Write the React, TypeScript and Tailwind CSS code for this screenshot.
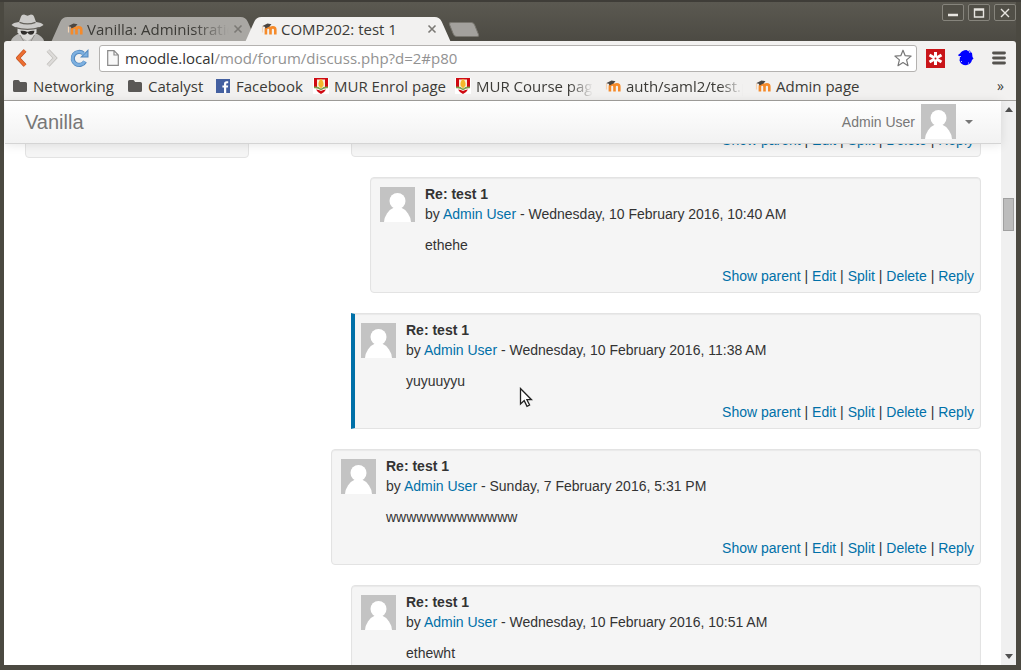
import { useState } from 'react';
import type { ReactNode } from 'react';
import { clsx } from 'clsx';

function MoodleIcon() {
  return (
    <svg width="16" height="16" viewBox="0 0 16 16" className="shrink-0" aria-hidden="true">
      <path d="M4.900 13.500V8.800c0-3.200 4.600-3.200 4.600 0v4.700M9.500 8.800c0-3.200 4.800-3.200 4.800 0v4.700" fill="none" stroke="#f58a2a" strokeWidth="2.600" />
      <path d="M1 5.200 6.500 2.500 10.500 3.200 8.500 5.600 4.600 7.600 3.800 5.800Z" fill="#4a4642" />
      <path d="M1.500 5.500v6" stroke="#f3d3b4" strokeWidth="1.200" />
    </svg>
  );
}

function FolderIcon() {
  return (
    <svg width="15" height="14" viewBox="0 0 15 14" className="shrink-0" aria-hidden="true">
      <path d="M0 2.500Q0 1 1.500 1H5q1 0 1.500 1l.5 1h5.500Q14 3 14 4.500v7q0 1.500-1.500 1.500h-11Q0 13 0 11.500Z" fill="#5a5856" />
    </svg>
  );
}

function FacebookIcon() {
  return (
    <svg width="15" height="14" viewBox="0 0 15 14" className="shrink-0" aria-hidden="true">
      <rect width="14" height="14" fill="#4460a0" />
      <path d="M8 14V8.600H6.400V6.500H8V4.900C8 3.200 9 2.200 10.600 2.200h1.600v2H11c-.6 0-.8.3-.8.9v1.400h2l-.3 2.100h-1.700V14Z" fill="#fff" />
    </svg>
  );
}

function CrestIcon() {
  return (
    <svg width="16" height="16" viewBox="0 0 16 16" className="shrink-0" aria-hidden="true">
      <rect width="16" height="16" fill="#fff" />
      <path d="M1 0h14v9H1Z" fill="#cf0a12" />
      <path d="M4 1.500h8V9H4Z" fill="#f8f0dc" />
      <path d="M8 .8q3.200 3 2.400 7L8 10.500 5.600 7.800Q4.800 3.800 8 .8Z" fill="#f4b72a" />
      <path d="M1 9.500q4-.5 7 2 3-2.500 7-2" fill="none" stroke="#7da04a" strokeWidth="1.600" />
      <path d="M3 11.500q3 .3 5 1.500 2-1.200 5-1.500-1.500 3-5 4.500-3.500-1.500-5-4.500Z" fill="#cf0a12" />
    </svg>
  );
}

function IncognitoIcon() {
  return (
    <svg width="35" height="27" viewBox="0 0 35 27" className="shrink-0" aria-hidden="true">
      <path d="M1 27q1.500-5 8-7.500h17q6.500 2.500 8 7.500Z" fill="#b9b8b6" />
      <path d="M7.500 12h19v6.500L22 24l-4.500 3-5-3-5-5.500Z" fill="#dad9d7" />
      <path d="M1.500 11q1.500-2.500 7.500-3l2-5.500Q11.500.5 14 .5l3.500 1.200L21 .5q2.500 0 3 2L26 8q6 .5 7.500 3-5 3.800-16 3.800T1.500 11Z" fill="#cccbc9" />
      <path d="M9.500 8.300q8 3.200 16 0" fill="none" stroke="#65625c" strokeWidth="1.400" />
      <path d="M5 13.700q12.500 3.400 25 0" fill="none" stroke="#65625c" strokeWidth="1.200" />
      <path d="M10.500 16.800q4-.6 6.500 1h1q3-1.600 6.500-1l-.6 2.200q-.6 1.700-3 1.700-2.300 0-3.400-2.200-1.100 2.200-3.400 2.200-2.400 0-3-1.700Z" fill="#2f2d2b" />
      <path d="m10 21 3.500 6m11-6L21 27" fill="none" stroke="#8f8d89" strokeWidth="1" />
    </svg>
  );
}

function Avatar() {
  return (
    <svg width="35" height="35" viewBox="0 0 35 35" className="block shrink-0" role="img" aria-label="Picture of Admin User">
      <rect width="35" height="35" fill="#c3c3c3" />
      <circle cx="17.500" cy="14" r="8" fill="#fff" />
      <path d="M4 35q0-4 3-8.500 3-4.500 7-6h7q4 1.500 7 6 3 4.500 3 8.500Z" fill="#fff" />
    </svg>
  );
}

function Tab({ title, active, fade, onSelect }: { title: string; active: boolean; fade?: boolean; onSelect: () => void }) {
  const shape = active ? 'bg-[#f2f1f0]' : 'bg-[#a9a7a3]';
  return (
    <div className={clsx('relative -ml-3 flex h-6 w-[206px] items-center pl-4 pr-[14px]', active && 'z-10')}>
      <span className={clsx('absolute inset-y-0 left-[6px] w-1/2 -skew-x-[24deg] rounded-tl-[5px]', shape)} />
      <span className={clsx('absolute inset-y-0 right-[6px] w-1/2 skew-x-[24deg] rounded-tr-[5px]', shape)} />
      <button type="button" role="tab" aria-selected={active} onClick={onSelect} className="relative flex min-w-0 flex-1 items-center gap-1 overflow-hidden text-[15px] leading-6 text-[#3c3b37]">
        <MoodleIcon />
        <span className={clsx('overflow-hidden whitespace-nowrap', fade && '[mask-image:linear-gradient(to_right,black_75%,transparent)]')}>{title}</span>
      </button>
      <button type="button" aria-label="Close tab" className="relative ml-1 shrink-0">
        <svg width="10" height="10" viewBox="0 0 10 10">
          <path d="m1.500 1.500 7 7m0-7-7 7" stroke="#7b7975" strokeWidth="1.600" />
        </svg>
      </button>
    </div>
  );
}

function WindowButton({ label, children }: { label: string; children: ReactNode }) {
  return (
    <button type="button" aria-label={label} className="flex h-[17px] w-[22px] items-center justify-center rounded-[2px] border border-[#86847c] bg-[#514f47]">
      <svg width="12" height="10" viewBox="0 0 12 10" fill="none" stroke="#e8e6e1" strokeWidth="1.400">
        {children}
      </svg>
    </button>
  );
}

const bookmarks = [
  { label: 'Networking', icon: <FolderIcon />, width: 'w-[115px]' },
  { label: 'Catalyst', icon: <FolderIcon />, width: 'w-[88px]' },
  { label: 'Facebook', icon: <FacebookIcon />, width: 'w-[97px]' },
  { label: 'MUR Enrol page', icon: <CrestIcon />, width: 'w-[142px]' },
  { label: 'MUR Course page', icon: <CrestIcon />, width: 'w-[150px]', fade: true },
  { label: 'auth/saml2/test.p', icon: <MoodleIcon />, width: 'w-[150px]', fade: true },
  { label: 'Admin page', icon: <MoodleIcon />, width: 'w-[115px]' },
];

const posts = [
  { id: 78, date: 'Wednesday, 10 February 2016, 10:38 AM', body: 'test', indent: 'ml-[78px]' },
  { id: 79, date: 'Wednesday, 10 February 2016, 10:40 AM', body: 'ethehe', indent: 'ml-[97px]' },
  { id: 80, date: 'Wednesday, 10 February 2016, 11:38 AM', body: 'yuyuuyyu', indent: 'ml-[78px]', target: true },
  { id: 81, date: 'Sunday, 7 February 2016, 5:31 PM', body: 'wwwwwwwwwwwww', indent: 'ml-[58px]' },
  { id: 82, date: 'Wednesday, 10 February 2016, 10:51 AM', body: 'ethewht', indent: 'ml-[78px]' },
];

const commands = ['Show parent', 'Edit', 'Split', 'Delete', 'Reply'];

function Post({ post }: { post: (typeof posts)[number] }) {
  return (
    <article
      id={`p${post.id}`}
      className={clsx(
        'relative flex gap-[10px] border border-[#e3e3e3] bg-[#f5f5f5] pb-[6px] pr-[6px] pt-[6px] shadow-[inset_0_1px_1px_rgba(0,0,0,0.05)]',
        post.indent,
        post.target ? 'rounded-r-[4px] border-l-4 border-l-[#0070a8] pl-[6px]' : 'rounded-[4px] pl-[9px]'
      )}
    >
      <div className="pt-[3px]"><Avatar /></div>
      <div className="min-w-0 flex-1">
        <h3 className="font-bold">Re: test 1</h3>
        <p>by <a href="#user" className="text-[#0070a8]">Admin User</a> - {post.date}</p>
        <p className="py-[11px]">{post.body}</p>
        <p className="text-right">
          {commands.map((name, i) => (
            <span key={name}>{i > 0 && ' | '}<a href={`#p${post.id}`} className="text-[#0070a8]">{name}</a></span>
          ))}
        </p>
      </div>
      {post.target && (
        <svg width="14" height="21" viewBox="0 0 14 21" className="absolute left-[164px] top-[73px]" aria-hidden="true">
          <path d="M1.500 1.500v15.500l3.700-3.400 2.800 5.700 2.600-1.300-2.700-5.300h4.600Z" fill="#fff" stroke="#222" strokeWidth="1.300" />
        </svg>
      )}
    </article>
  );
}

export default function App() {
  const [tab, setTab] = useState(1);
  const [url, setUrl] = useState('/mod/forum/discuss.php?d=2#p80');

  return (
    <div className="flex h-screen flex-col overflow-hidden border-t-2 border-[#3f3d38] bg-[#4b4941] px-1 pb-[5px] pr-[5px] font-['Open_Sans',sans-serif]">
      <header className="flex h-[39px] shrink-0 justify-between bg-linear-to-b from-[#5b5951] to-[#4c4a43]">
        <div className="flex items-end">
          <div className="ml-[6px]"><IncognitoIcon /></div>
          <div role="tablist" className="ml-[18px] flex items-end">
            <Tab title="Vanilla: Administration" active={tab === 0} fade onSelect={() => setTab(0)} />
            <Tab title="COMP202: test 1" active={tab === 1} onSelect={() => setTab(1)} />
          </div>
          <button type="button" aria-label="New tab" className="mb-1 h-[15px] w-[26px] skew-x-[22deg] rounded-[3px] border border-[#78766f] bg-[#a3a19d]" />
        </div>
        <div className="flex gap-1 pt-[2px]">
          <WindowButton label="Minimize"><path d="M1 7h10" strokeWidth="2.500" /></WindowButton>
          <WindowButton label="Maximize"><path d="M1.500 1h9v8h-9ZM1 2h10" /></WindowButton>
          <WindowButton label="Close"><path d="m2 1 8 8m0-8-8 8" /></WindowButton>
        </div>
      </header>

      <div className="flex h-[31px] shrink-0 items-center rounded-t-[3px] bg-[#f2f1f0] pl-[10px] pr-[10px] pt-[3px]">
        <button type="button" aria-label="Back">
          <svg width="14" height="20" viewBox="0 0 14 20"><path d="M11 2.500 4 10l7 7.500" fill="none" stroke="#b84a1c" strokeWidth="4" strokeLinejoin="round" /><path d="M11 2.500 4 10l7 7.500" fill="none" stroke="#ec6f32" strokeWidth="2.600" /></svg>
        </button>
        <button type="button" aria-label="Forward" className="ml-[17px]">
          <svg width="14" height="20" viewBox="0 0 14 20"><path d="m3 2.500 7 7.500-7 7.500" fill="none" stroke="#c2c0bd" strokeWidth="4" /><path d="m3 2.500 7 7.500-7 7.500" fill="none" stroke="#dddbd9" strokeWidth="2.400" /></svg>
        </button>
        <button type="button" aria-label="Reload" className="ml-[11px]">
          <svg width="19" height="20" viewBox="0 0 19 20"><path d="M15 13.500A6.500 6.500 0 1 1 13.500 5.500" fill="none" stroke="#5288be" strokeWidth="4.200" /><path d="M18.500 1v8.500H10Z" fill="#5288be" /><path d="M14.700 13.300A6.500 6.500 0 1 1 13.800 6" fill="none" stroke="#7db0e0" strokeWidth="2.600" /><path d="M17.500 3.500v5h-5Z" fill="#7db0e0" /></svg>
        </button>
        <div className="ml-[10px] flex h-[27px] min-w-0 flex-1 items-center rounded-[3px] border border-[#b4b2b0] bg-white pl-[7px] pr-1 text-[15px]">
          <svg width="12" height="16" viewBox="0 0 12 16" className="mr-[6px] shrink-0" aria-hidden="true"><path d="M.7.7h6.300l4.300 4.300v10.300H.7ZM7 .7V5h4.300" fill="#f8f8f8" stroke="#8a8a8a" strokeWidth="1.200" /></svg>
          <label htmlFor="address" className="shrink-0 text-[#333]">moodle.local</label>
          <input id="address" value={url} onChange={e => setUrl(e.target.value)} className="min-w-0 flex-1 bg-transparent text-[#929292] outline-none" />
          <button type="button" aria-label="Bookmark this page">
            <svg width="18" height="18" viewBox="0 0 18 18"><path d="m9 1.200 2.200 5.500 5.900.4-4.500 3.800 1.400 5.800L9 13.500l-5 3.200 1.400-5.800L.9 7.100l5.900-.4Z" fill="#fff" stroke="#777" strokeWidth="1.200" strokeLinejoin="round" /></svg>
          </button>
        </div>
        <button type="button" aria-label="Password manager" className="ml-[9px]">
          <svg width="19" height="19" viewBox="0 0 19 19"><rect width="19" height="19" fill="#c91519" /><path d="M9.500 3v13M3.500 6l12 7M15.500 6l-12 7" stroke="#fff" strokeWidth="3" /><circle cx="9.500" cy="9.500" r="1" fill="#c91519" /></svg>
        </button>
        <button type="button" aria-label="Extension" className="ml-3">
          <svg width="18" height="18" viewBox="0 0 18 18"><path d="m1 6 2-1.500q2-3.500 6.500-3.500l1.500 1 2-.5.500 1.500 1.500 1 .5 4 1 1.500-1.500 1.500q-1 4.500-6 5.200-5 0-6.500-4.700L3 8.500Z" fill="#00f" /><path d="M2 7.500h2M12 2l1 2M4 13l1-1M11 14h1" stroke="#fff" strokeWidth="0.800" /></svg>
        </button>
        <button type="button" aria-label="Menu" className="ml-[17px]">
          <svg width="14" height="16" viewBox="0 0 14 16"><path d="M1.500 3h11M1.500 8h11M1.500 13h11" stroke="#55534f" strokeWidth="2.800" strokeLinecap="round" /></svg>
        </button>
      </div>

      <nav aria-label="Bookmarks" className="flex h-[29px] shrink-0 items-center justify-between border-b border-[#a3a19e] bg-[#f2f1f0] pl-[9px] pr-3">
        <div className="flex min-w-0 overflow-hidden">
          {bookmarks.map(b => (
            <a key={b.label} href="#bookmark" className={clsx('flex shrink-0 items-center gap-[5px] pr-3 text-[15px] leading-5 text-[#3c3b37]', b.width)}>
              {b.icon}
              <span className={clsx('whitespace-nowrap', b.fade && 'overflow-hidden [mask-image:linear-gradient(to_right,black_80%,transparent)]')}>{b.label}</span>
            </a>
          ))}
        </div>
        <button type="button" aria-label="More bookmarks" className="text-[14px] leading-5 text-[#3c3b37]">»</button>
      </nav>

      <div className="flex min-h-0 flex-1 bg-white font-['Liberation_Sans',Arial,sans-serif] text-[14px] leading-5 text-[#333]">
        <div className="flex min-w-0 flex-1 flex-col pl-px">
          <div className="z-10 flex h-[43px] shrink-0 items-center justify-between border-b border-[#d4d4d4] bg-linear-to-b from-white to-[#f2f2f2] pb-px pl-5 pr-7 shadow-[0_1px_10px_rgba(0,0,0,0.1)]">
            <a href="#home" className="text-[20px] text-[#777]">Vanilla</a>
            <button type="button" className="flex items-center text-[#777]">
              Admin User
              <span className="ml-[6px] mr-[9px]"><Avatar /></span>
              <svg width="8" height="4" viewBox="0 0 8 4" aria-hidden="true"><path d="M0 0h8L4 4Z" fill="#777" /></svg>
            </button>
          </div>
          <div className="min-h-0 flex-1 overflow-hidden">
            <div className="-mt-[103px] flex items-start gap-6 px-5">
              <aside className="h-[117px] w-[224px] shrink-0 rounded-[4px] border border-[#e3e3e3] bg-[#f5f5f5]" />
              <main className="flex min-w-0 flex-1 flex-col gap-5">
                {posts.map(post => <Post key={post.id} post={post} />)}
              </main>
            </div>
          </div>
        </div>
        <div className="flex w-[15px] shrink-0 flex-col items-center bg-[#f0f0f0] py-[6px]" aria-hidden="true">
          <svg width="8" height="5" viewBox="0 0 8 5"><path d="M0 5 4 0l4 5Z" fill="#505050" /></svg>
          <div className="mt-[86px] h-[33px] w-[11px] border border-[#a0a0a0] bg-[#bcbcbc]" />
          <svg width="8" height="5" viewBox="0 0 8 5" className="mt-auto"><path d="M0 0h8L4 5Z" fill="#505050" /></svg>
        </div>
      </div>
    </div>
  );
}
